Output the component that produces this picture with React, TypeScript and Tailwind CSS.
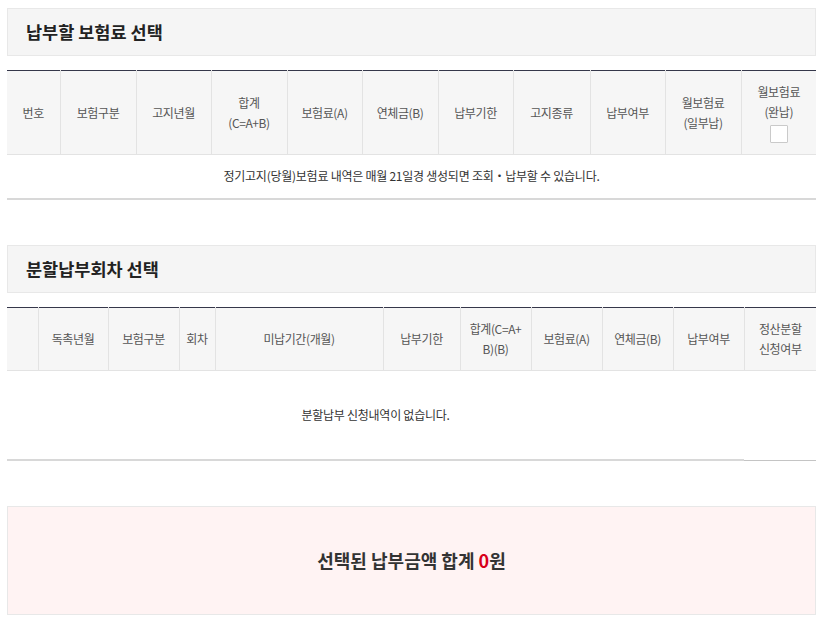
import React from "react";

const th = "border-l border-[#e3e3e3] first:border-l-0 font-normal text-[12px] leading-[20px] tracking-[-0.4px] text-[#555] align-middle text-center px-0";

function Header({ title }: { title: string }) {
  return (
    <div className="h-[48px] bg-[#f5f5f5] border border-[#e8e8e8] flex items-center pl-[18px]">
      <h2 className="text-[17.5px] font-bold text-[#222] tracking-[0px] leading-none">{title}</h2>
    </div>
  );
}

export default function App() {
  const cols1 = [53, 76, 75, 76, 75, 76, 75, 77, 75, 76, 75];
  const cols2 = [31, 70, 71, 36, 168, 77, 71, 71, 71, 71, 72];
  return (
    <div className="w-[825px] h-[625px] bg-white px-[7px] pt-[8px] font-['Noto_Sans_CJK_KR','Noto_Sans',sans-serif] overflow-hidden">
      <div className="w-[809px]">
        <Header title="납부할 보험료 선택" />
        <table className="mt-[14px] w-full table-fixed border-collapse border-t border-[#35374a]">
          <colgroup>
            {cols1.map((w, i) => (
              <col key={i} style={{ width: w }} />
            ))}
          </colgroup>
          <thead>
            <tr className="bg-[#f6f6f6] h-[84px] border-b border-[#e3e3e3]">
              <th className={th}>번호</th>
              <th className={th}>보험구분</th>
              <th className={th}>고지년월</th>
              <th className={th}>
                합계
                <br />
                (C=A+B)
              </th>
              <th className={th}>보험료(A)</th>
              <th className={th}>연체금(B)</th>
              <th className={th}>납부기한</th>
              <th className={th}>고지종류</th>
              <th className={th}>납부여부</th>
              <th className={th}>
                월보험료
                <br />
                (일부납)
              </th>
              <th className={th}>
                <div className="flex flex-col items-center">
                  <span>월보험료</span>
                  <span>(완납)</span>
                  <input
                    type="checkbox"
                    className="appearance-none mt-[3px] w-[18px] h-[18px] border border-[#cacaca] bg-white rounded-[1px]"
                  />
                </div>
              </th>
            </tr>
          </thead>
          <tbody>
            <tr className="border-b-2 border-[#d8d8d8]">
              <td
                colSpan={11}
                className="h-[44px] text-center align-middle text-[12px] tracking-[-0.25px] text-[#333]"
              >
                정기고지(당월)보험료 내역은 매월 21일경 생성되면 조회・납부할 수 있습니다.
              </td>
            </tr>
          </tbody>
        </table>

        <div className="mt-[45px]">
          <Header title="분할납부회차 선택" />
        </div>
        <table className="mt-[14px] w-full table-fixed border-collapse border-t border-[#35374a]">
          <colgroup>
            {cols2.map((w, i) => (
              <col key={i} style={{ width: w }} />
            ))}
          </colgroup>
          <thead>
            <tr className="bg-[#f6f6f6] h-[63px] border-b border-[#e3e3e3]">
              <th className={th}></th>
              <th className={th}>독촉년월</th>
              <th className={th}>보험구분</th>
              <th className={th}>회차</th>
              <th className={th}>미납기간(개월)</th>
              <th className={th}>납부기한</th>
              <th className={th}>
                합계(C=A+
                <br />
                B)(B)
              </th>
              <th className={th}>보험료(A)</th>
              <th className={th}>연체금(B)</th>
              <th className={th}>납부여부</th>
              <th className={th}>
                정산분할
                <br />
                신청여부
              </th>
            </tr>
          </thead>
          <tbody>
            <tr>
              <td
                colSpan={10}
                className="h-[90px] text-center align-middle text-[12px] tracking-[-0.25px] text-[#333] border-b-2 border-[#d8d8d8]"
              >
                분할납부 신청내역이 없습니다.
              </td>
              <td className="border-b border-[#c4c4c4]"></td>
            </tr>
          </tbody>
        </table>

        <div className="mt-[45px] h-[109px] bg-[#fff3f3] border border-[#e8e8e8] flex items-center justify-center">
          <p className="text-[18px] font-bold text-[#333] tracking-[0px]">
            선택된 납부금액 합계 <span className="text-[#d7001a]">0</span>원
          </p>
        </div>
      </div>
    </div>
  );
}
